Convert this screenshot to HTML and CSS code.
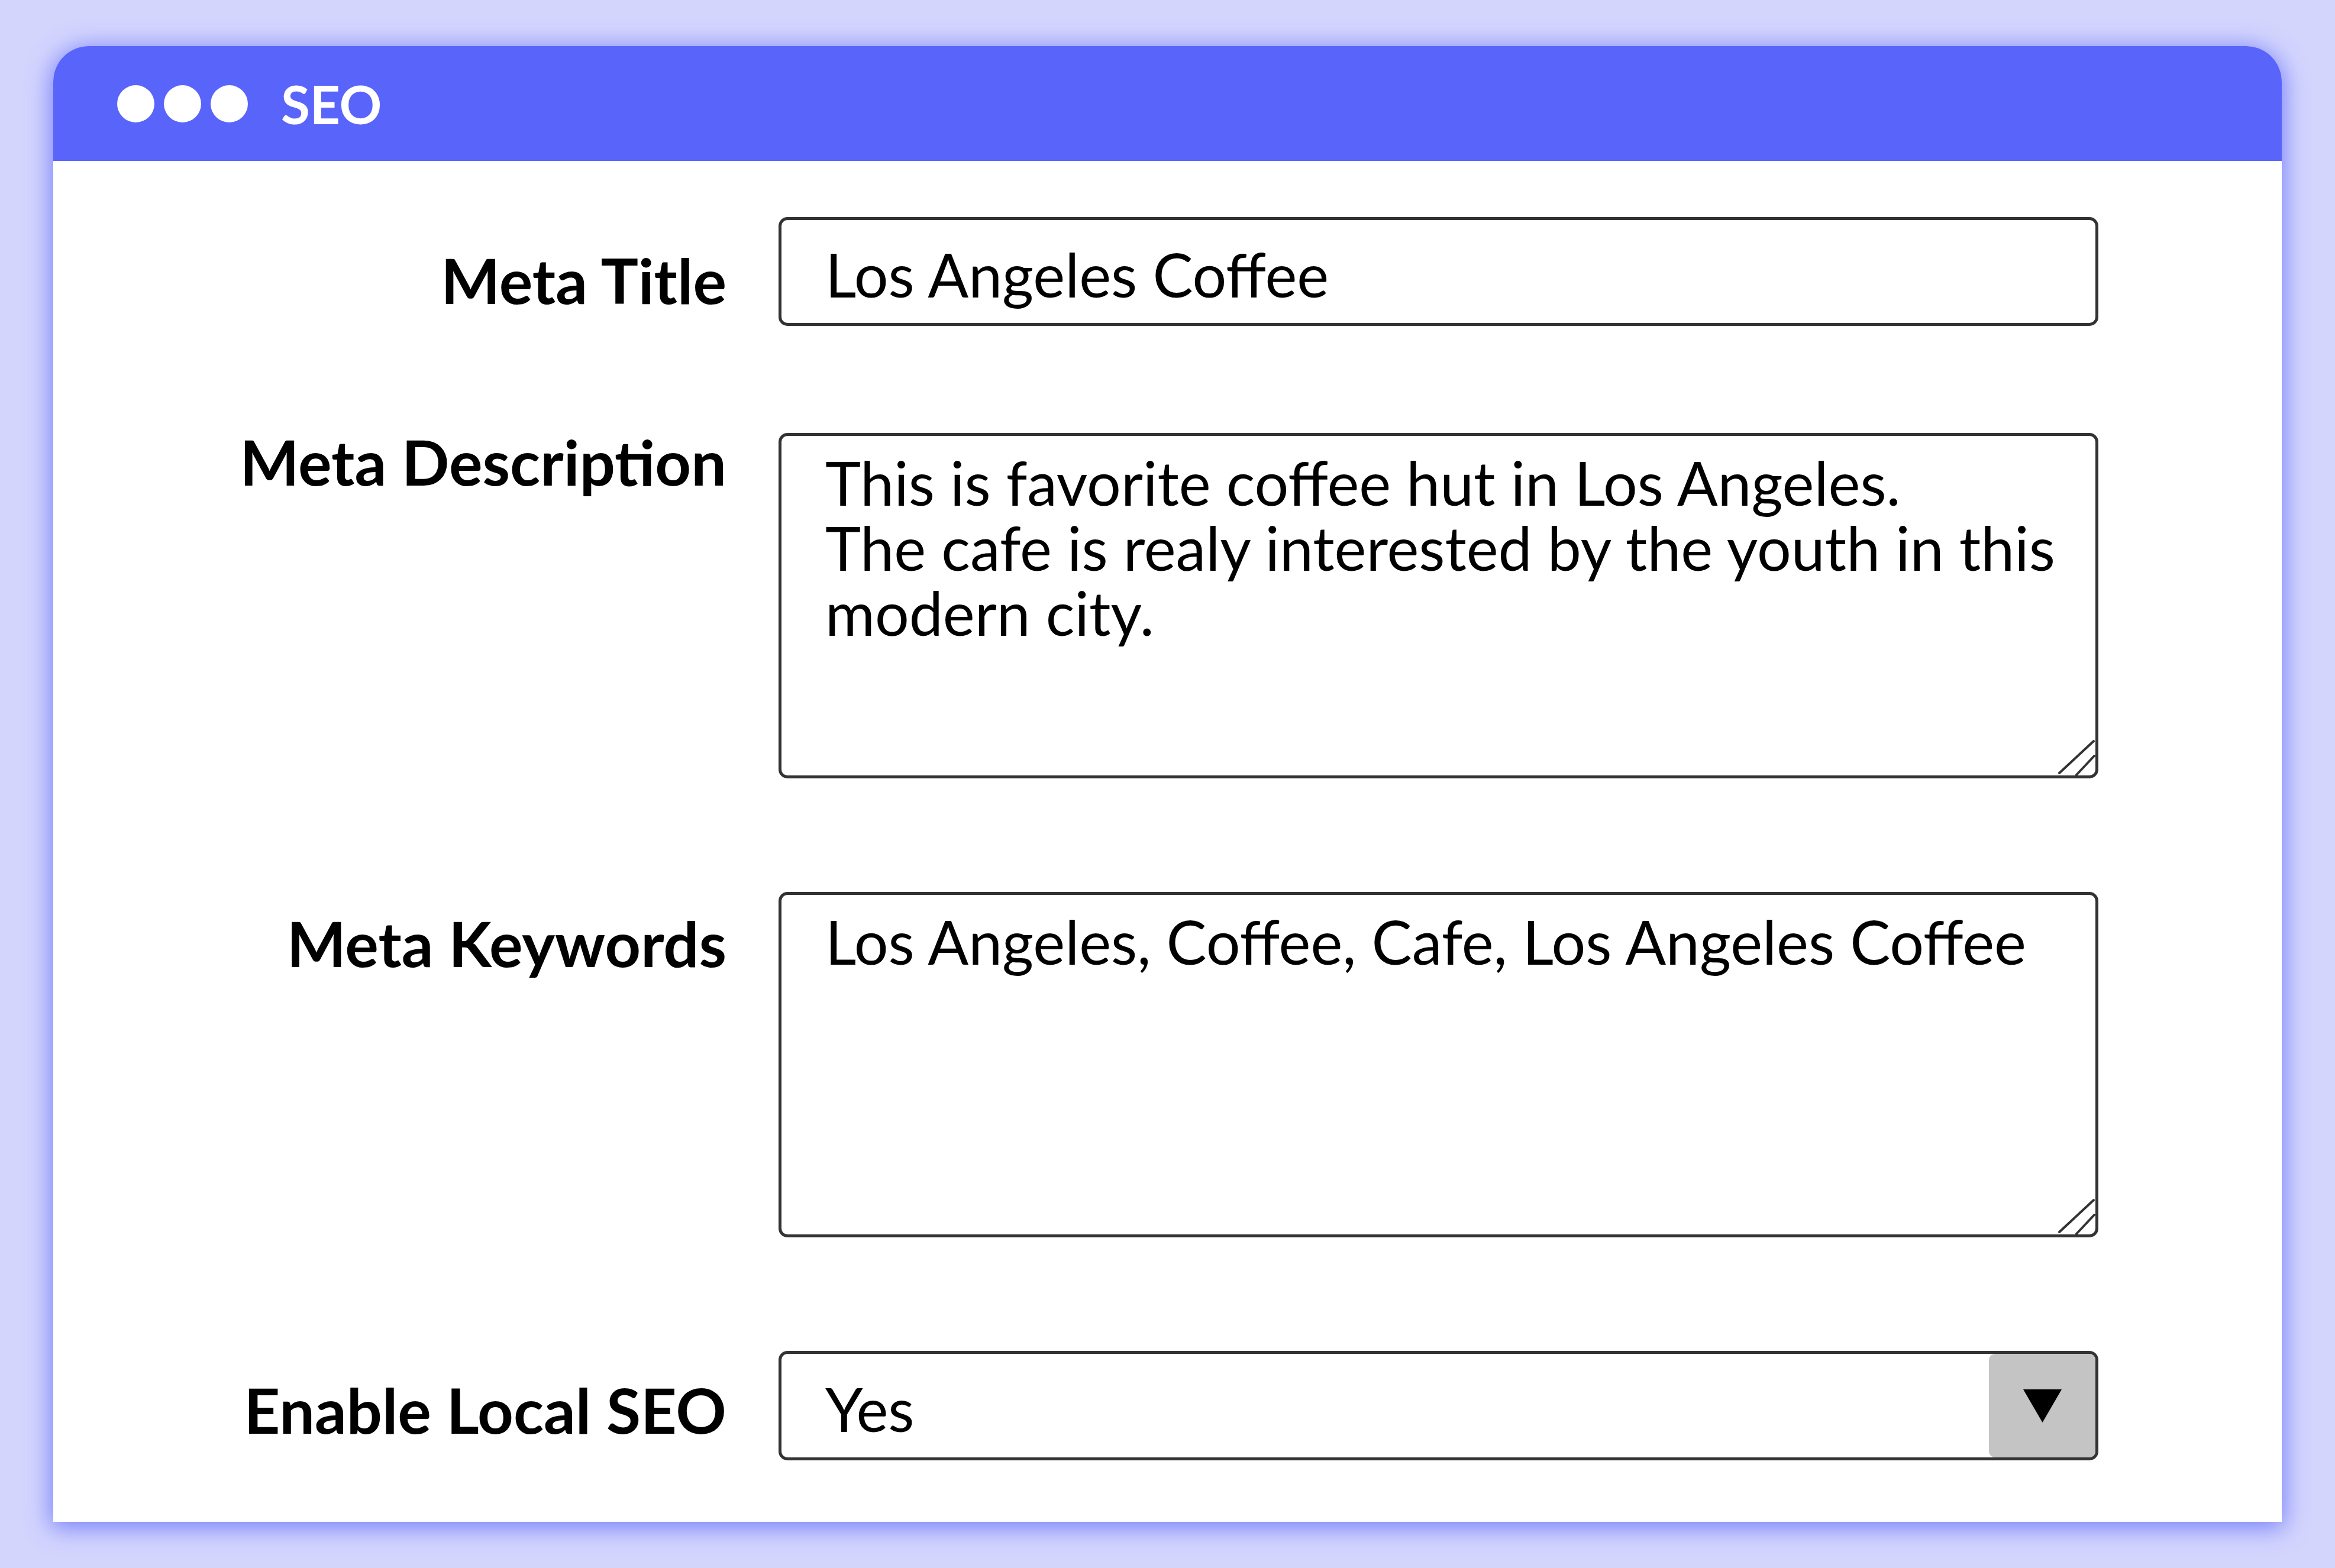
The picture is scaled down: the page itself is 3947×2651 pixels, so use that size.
FILE: index.html
```html
<!DOCTYPE html>
<html lang="en">
<head>
    <meta charset="UTF-8">
    <meta name="viewport" content="width=device-width, initial-scale=1.0">
    <title>SEO</title>
    <link rel="stylesheet" href="styles.css">
</head>
<body>
    <div class="window">
        <div class="window-bar">
            <span class="dot"></span>
            <span class="dot"></span>
            <span class="dot"></span>
            <span class="window-title">SEO</span>
        </div>

        <form class="seo-form">
            <label class="field-label label-title" for="metaTitle">Meta Title</label>
            <input type="text" id="metaTitle" class="field-input" value="Los Angeles Coffee" readonly>

            <label class="field-label label-desc" for="metaDesc">Meta Description</label>
            <div class="area-wrap">
                <textarea id="metaDesc" class="field-area" readonly>This is favorite coffee hut in Los Angeles.
The cafe is realy interested by the youth in this modern city.</textarea>
                <svg class="grip" width="70" height="70" viewBox="0 0 70 70">
                    <path d="M4 61 L62 7 M33 64 L63 32" stroke="#333" stroke-width="4" stroke-linecap="round" fill="none"/>
                </svg>
            </div>

            <label class="field-label label-keys" for="metaKeys">Meta Keywords</label>
            <div class="area-wrap">
                <textarea id="metaKeys" class="field-area" readonly>Los Angeles, Coffee, Cafe, Los Angeles Coffee</textarea>
                <svg class="grip" width="70" height="70" viewBox="0 0 70 70">
                    <path d="M4 61 L62 7 M33 64 L63 32" stroke="#333" stroke-width="4" stroke-linecap="round" fill="none"/>
                </svg>
            </div>

            <label class="field-label label-local" for="localSeo">Enable Local SEO</label>
            <div class="select-wrap">
                <select id="localSeo" class="field-select">
                    <option value="yes">Yes</option>
                    <option value="no">No</option>
                </select>
                <span class="select-arrow">
                    <svg width="65" height="56" viewBox="0 0 65 56"><polygon points="0,0 65,0 32.5,56" fill="#000"/></svg>
                </span>
            </div>
        </form>
    </div>
</body>
</html>
```

FILE: styles.css
```css
body {
    margin: 0;
    padding: 78px 90px;
    background-color: #d4d5fd;
    font-family: Lato, "Open Sans", sans-serif;
    color: #000;
}

.window {
    background-color: #fff;
    border-radius: 60px 60px 0 0;
    box-shadow: 0 6px 40px 4px rgba(88, 101, 251, 0.75);
    overflow: hidden;
}

.window-bar {
    height: 194px;
    display: flex;
    align-items: center;
    padding-left: 108px;
    background-color: #5964fb;
}

.dot {
    width: 63px;
    height: 63px;
    margin-right: 16px;
    border-radius: 50%;
    background-color: #fff;
}

.window-title {
    margin-left: 40px;
    color: #fff;
    font-size: 89px;
    font-weight: 700;
    line-height: 1;
}

.seo-form {
    display: grid;
    grid-template-columns: 1138px 1fr;
    column-gap: 88px;
    row-gap: 192px;
    padding: 95px 310px 104px 0;
}

.field-label {
    text-align: right;
    font-size: 106px;
    font-weight: 700;
    line-height: 1;
    white-space: nowrap;
}

.label-title { padding-top: 53px; }
.label-desc { margin-top: -5px; }
.label-keys { padding-top: 33px; }
.label-local { padding-top: 46px; }

.field-input, .field-area, .field-select {
    box-sizing: border-box;
    width: 100%;
    margin: 0;
    border: 5px solid #333;
    border-radius: 15px;
    background-color: #fff;
    color: #000;
    font-family: Lato, "Open Sans", sans-serif;
    font-size: 102px;
    outline: none;
}

.field-input {
    height: 184px;
    margin-bottom: -11px;
    padding: 8px 74px 0;
}

.area-wrap, .select-wrap {
    position: relative;
}

.field-area {
    display: block;
    height: 584px;
    padding: 24px 30px 0 74px;
    line-height: 110px;
    resize: none;
    overflow: hidden;
}

.grip {
    position: absolute;
    right: 0;
    bottom: 0;
}

.field-select {
    display: block;
    height: 185px;
    padding: 10px 74px 0;
    appearance: none;
    -webkit-appearance: none;
}

.select-arrow {
    position: absolute;
    top: 5px;
    right: 5px;
    bottom: 5px;
    width: 180px;
    display: flex;
    align-items: center;
    justify-content: center;
    background-color: #c4c4c4;
    border-radius: 10px;
}
```
